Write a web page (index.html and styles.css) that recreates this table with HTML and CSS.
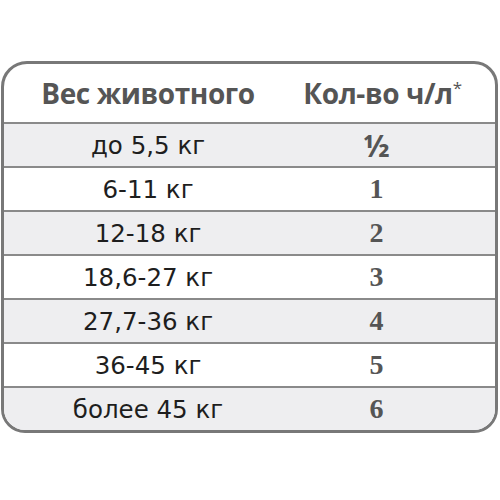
FILE: index.html
```html
<!DOCTYPE html>
<html lang="ru">
<head>
<meta charset="utf-8">
<link rel="stylesheet" href="styles.css">
</head>
<body>
<div class="page">
  <div class="table">
    <div class="row head">
      <div class="c1">Вес животного</div>
      <div class="c2">Кол-во ч/л<sup>*</sup></div>
    </div>
    <div class="row gray"><div class="c1">до 5,5 кг</div><div class="c2 frac">½</div></div>
    <div class="row"><div class="c1">6-11 кг</div><div class="c2 num">1</div></div>
    <div class="row gray"><div class="c1">12-18 кг</div><div class="c2 num">2</div></div>
    <div class="row"><div class="c1">18,6-27 кг</div><div class="c2 num">3</div></div>
    <div class="row gray"><div class="c1">27,7-36 кг</div><div class="c2 num">4</div></div>
    <div class="row"><div class="c1">36-45 кг</div><div class="c2 num">5</div></div>
    <div class="row gray last"><div class="c1">более 45 кг</div><div class="c2 num">6</div></div>
  </div>
</div>
</body>
</html>
```
FILE: styles.css
```css
html, body {
  margin: 0;
  padding: 0;
  background: #fff;
}
.page {
  width: 500px;
  height: 500px;
  padding: 61px 0 0 1px;
  box-sizing: border-box;
}
.table {
  width: 497px;
  box-sizing: border-box;
  border: 3px solid #787878;
  border-radius: 26px 24px 24px 24px;
  overflow: hidden;
  background: #fff;
}
.row {
  display: grid;
  grid-template-columns: 288px 1fr;
  height: 42px;
  border-top: 2px solid #8a8a8a;
  align-items: center;
  font-family: "DejaVu Sans", sans-serif;
  font-size: 24.5px;
  color: #1e1e1e;
}
.row.gray {
  background: #eeeef0;
}
.row.head {
  height: 58px;
  border-top: none;
  font-family: "Open Sans", "Noto Sans", sans-serif;
  font-weight: 700;
  font-size: 28px;
  color: #555;
  letter-spacing: -0.4px;
}
.c1 {
  text-align: center;
}
.c2 {
  text-align: center;
  padding-right: 34px;
}
.head .c2 {
  padding-right: 22px;
}
.head sup {
  font-size: 17px;
  font-weight: 400;
  vertical-align: 10px;
  line-height: 0;
}
.num {
  font-family: "Liberation Serif", "DejaVu Serif", serif;
  font-weight: 700;
  font-size: 28px;
  color: #555;
}
.frac {
  font-family: "Open Sans", sans-serif;
  font-weight: 700;
  font-size: 30px;
  color: #555;
}
```
